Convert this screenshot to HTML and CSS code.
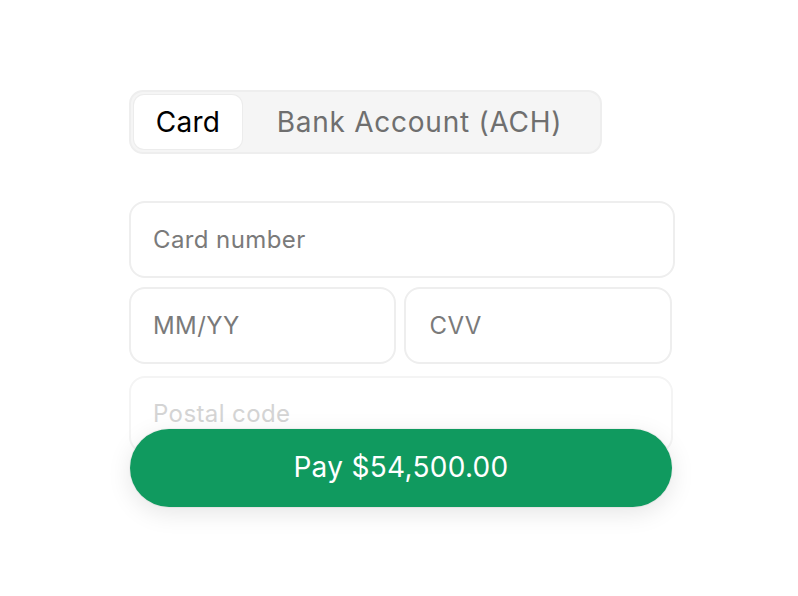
FILE: index.html
```html
<!DOCTYPE html>
<html>
<head>
<meta charset="utf-8">
<link rel="stylesheet" href="styles.css">
</head>
<body>
<div class="page">
  <div class="tabs">
    <div class="tab tab-active">Card</div>
    <div class="tab tab-ach">Bank Account (ACH)</div>
  </div>
  <div class="form">
    <div class="field field-full">Card number</div>
    <div class="row">
      <div class="field field-half">MM/YY</div>
      <div class="field field-half">CVV</div>
    </div>
    <div class="field field-postal">Postal code</div>
    <button class="pay">Pay $54,500.00</button>
  </div>
</div>
</body>
</html>
```
FILE: styles.css
```css
html, body {
  margin: 0;
  padding: 0;
  background: #ffffff;
}
body {
  font-family: Inter, "Noto Sans", sans-serif;
  width: 798px;
  height: 596px;
  overflow: hidden;
}
.page {
  padding: 90px 0 0 129px;
}
.tabs {
  display: inline-flex;
  box-sizing: border-box;
  height: 64px;
  width: 473px;
  padding: 3px;
  background: #f5f5f5;
  border: 2px solid #eeeeee;
  border-radius: 14px;
}
.tab {
  display: flex;
  align-items: center;
  font-size: 28px;
  color: #6f6f6f;
  letter-spacing: 0.3px;
}
.tab-active {
  width: 108px;
  justify-content: center;
  background: #ffffff;
  color: #000000;
  border-radius: 10px;
  box-shadow: 0 0 0 1px #ececec;
}
.tab-ach {
  flex: 1;
  justify-content: center;
  letter-spacing: 0.75px;
}
.form {
  margin-top: 47px;
  width: 546px;
  display: flex;
  flex-direction: column;
}
.field {
  box-sizing: border-box;
  height: 77px;
  border: 2px solid #eeeeee;
  border-radius: 16px;
  display: flex;
  align-items: center;
  padding-left: 22px;
  font-size: 24px;
  letter-spacing: 0.4px;
  color: #7a7a7a;
  background: #ffffff;
}
.row {
  display: flex;
  gap: 8px;
  margin-top: 9px;
  width: 543px;
}
.field-half {
  flex: 1;
}
.field-half + .field-half {
  padding-left: 24px;
}
.field-postal {
  margin-top: 12px;
  width: 544px;
  color: #d4d4d4;
  border-color: #f4f4f4;
  align-items: flex-start;
  padding-top: 21px;
}
.pay {
  margin-top: -24px;
  margin-left: 1px;
  width: 542px;
  height: 78px;
  border: none;
  border-radius: 39px;
  background: #109a5f;
  color: #ffffff;
  font-family: Inter, "Noto Sans", sans-serif;
  font-size: 28px;
  letter-spacing: 0.3px;
  padding-bottom: 3px;
  box-shadow: 0 6px 24px rgba(0, 0, 0, 0.10), 0 0 0 1px rgba(0,0,0,0.04);
  position: relative;
}
```
